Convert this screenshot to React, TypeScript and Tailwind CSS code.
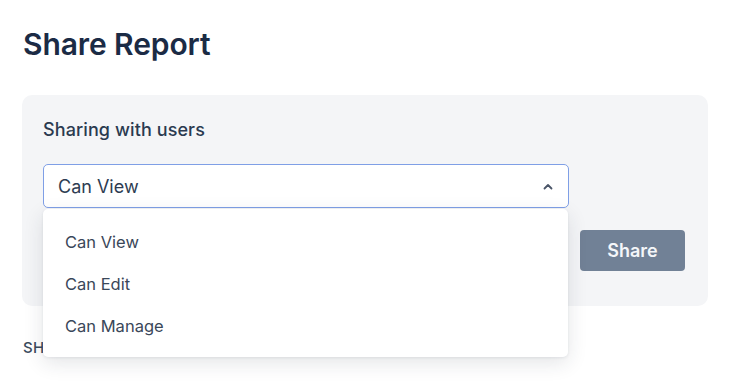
import React from "react";

export default function App() {
  return (
    <div className="w-[730px] h-[386px] bg-white overflow-hidden" style={{ fontFamily: "Inter, 'Noto Sans', sans-serif" }}>
      <div className="pl-[22px] pr-[22px] pt-[25px]">
        <h1 className="text-[30px] leading-[38px] font-semibold text-[#1b2b45] tracking-[-0.1px] ml-[1px]">Share Report</h1>
        <div className="mt-[32px] w-[686px] h-[211px] rounded-[10px] bg-[#f4f5f7] pt-[23px] pl-[21px] pr-[22px]">
          <div className="text-[18px] leading-[24px] font-medium text-[#2a3a50] tracking-[0.1px]">Sharing with users</div>
          <div className="mt-[22px] flex items-start gap-[11px]">
            <div className="relative w-[526px]">
              <div className="h-[44px] rounded-[5px] border border-[#7f9fe6] bg-white flex items-center justify-between pl-[14px] pr-[14px]">
                <span className="text-[18px] text-[#2d3c52]">Can View</span>
                <svg width="12" height="12" viewBox="0 0 12 12" className="mt-[2px]">
                  <path d="M2.5 7.5 L6 4 L9.5 7.5" fill="none" stroke="#4a5568" strokeWidth="1.8" strokeLinecap="round" strokeLinejoin="round" />
                </svg>
              </div>
              <div className="absolute left-0 top-[45px] w-[525px] h-[148px] bg-white rounded-[5px] shadow-[0_6px_20px_rgba(30,40,60,0.12),0_1px_3px_rgba(30,40,60,0.08)] z-10 pt-[12px]">
                {["Can View", "Can Edit", "Can Manage"].map((t) => (
                  <div key={t} className="h-[42px] flex items-center pl-[22px] text-[16.5px] text-[#3a4759]">{t}</div>
                ))}
              </div>
            </div>
            <button className="mt-[66px] w-[105px] h-[41px] rounded-[4px] bg-[#718196] text-[#f4f6f9] text-[18px] font-semibold">Share</button>
          </div>
        </div>
        <div className="mt-[32px] ml-[1px] text-[15px] leading-[20px] font-medium text-[#3b4a5c] tracking-[0.3px]">SHARED WITH (0)</div>
      </div>
    </div>
  );
}
